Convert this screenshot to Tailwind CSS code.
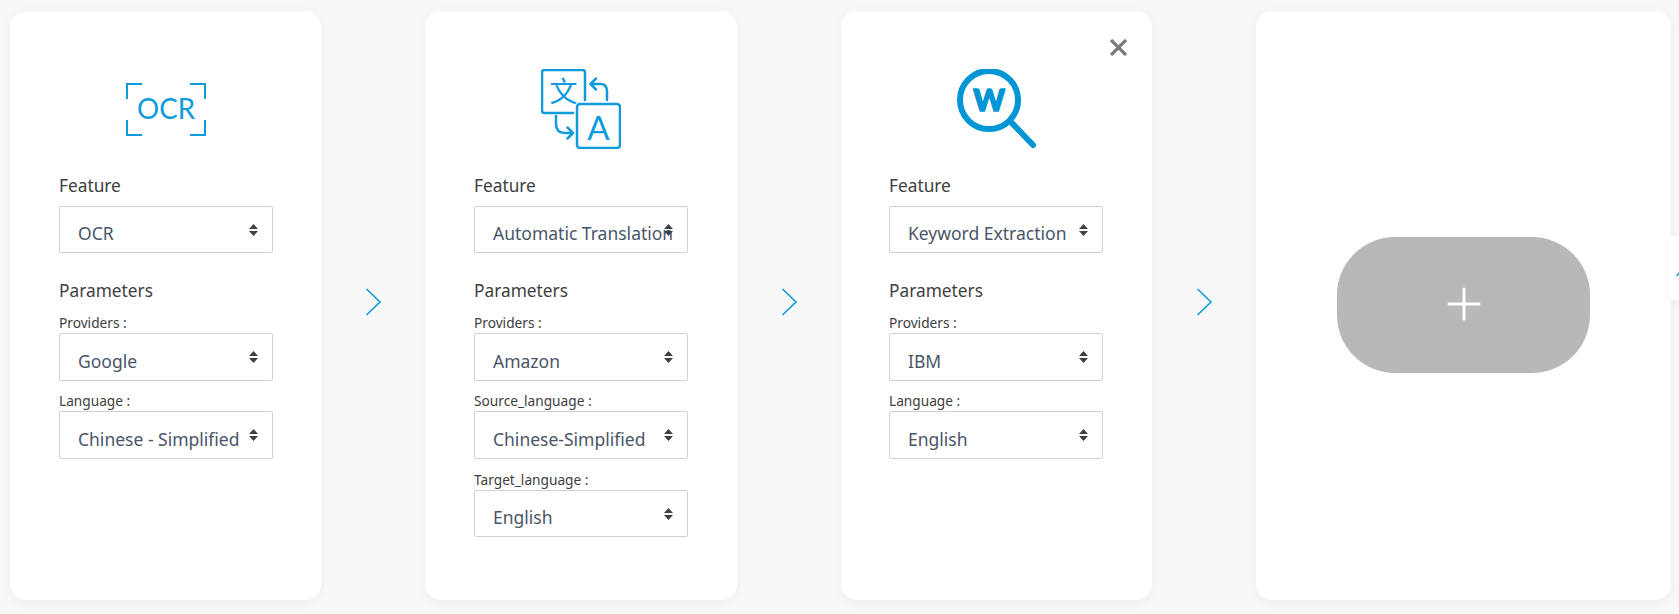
<!DOCTYPE html>
<html lang="en">
<head>
<meta charset="utf-8">
<title>Pipeline</title>
<script src="https://cdn.jsdelivr.net/npm/@tailwindcss/browser@4"></script>
</head>
<body class="bg-[#f8f8f8] font-['Noto_Sans',sans-serif] text-[#404040] overflow-hidden">
<div class="relative flex h-[614px] w-[1679px] pt-[11px] pb-[14px] pl-[10px] overflow-hidden">

  <!-- Card 1 -->
  <section class="w-[311px] shrink-0 bg-white rounded-2xl shadow-[0_2px_12px_rgba(0,0,0,0.05)] pt-[58px] pl-[49px] pr-[48px]">
    <div class="h-[80px] flex items-center justify-center pr-[1px]">
      <svg width="80" height="54" viewBox="0 0 80 54" fill="none" stroke="#0f9bdc" stroke-width="2">
        <path d="M1 17V2H16M64 2H79V17M1 38V53H16M64 53H79V38"/>
        <text x="11" y="37" textLength="58" lengthAdjust="spacingAndGlyphs" font-family="Lato" font-size="29" fill="#0f9bdc" stroke="none">OCR</text>
      </svg>
    </div>
    <div class="mt-[25px] h-[24px] text-[17.3px] leading-[24px]">Feature</div>
    <div class="relative mt-[8px] h-[47px] border border-[#ccd2dc] rounded-[2px] pl-[18px] pt-[14px] text-[17.5px] leading-[24px] text-[#4a5568] whitespace-nowrap overflow-hidden">OCR
      <svg class="absolute right-[14px] top-[17px]" width="9" height="12" viewBox="0 0 9 12" fill="#3f3f46"><path d="M4.5 0L9 5H0ZM4.5 12L0 7H9Z"/></svg></div>
    <div class="mt-[26px] h-[24px] text-[17.3px] leading-[24px]">Parameters</div>
    <div class="mt-[9px] h-[21px] text-[13.7px] leading-[21px]">Providers :</div>
    <div class="relative h-[48px] border border-[#ccd2dc] rounded-[2px] pl-[18px] pt-[15px] text-[17.5px] leading-[24px] text-[#4a5568] whitespace-nowrap overflow-hidden">Google
      <svg class="absolute right-[14px] top-[17px]" width="9" height="12" viewBox="0 0 9 12" fill="#3f3f46"><path d="M4.5 0L9 5H0ZM4.5 12L0 7H9Z"/></svg></div>
    <div class="mt-[9px] h-[21px] text-[13.7px] leading-[21px]">Language :</div>
    <div class="relative h-[48px] border border-[#ccd2dc] rounded-[2px] pl-[18px] pt-[15px] text-[17.5px] leading-[24px] text-[#4a5568] whitespace-nowrap overflow-hidden">Chinese - Simplified
      <svg class="absolute right-[14px] top-[17px]" width="9" height="12" viewBox="0 0 9 12" fill="#3f3f46"><path d="M4.5 0L9 5H0ZM4.5 12L0 7H9Z"/></svg></div>
  </section>

  <div class="w-[104px] shrink-0 flex items-center justify-center pb-[8px]">
    <svg width="17" height="28" viewBox="0 0 17 28" fill="none" stroke="#0f9bdc" stroke-width="1.6"><path d="M1.5 1L15 14L1.5 27"/></svg>
  </div>

  <!-- Card 2 -->
  <section class="w-[312px] shrink-0 bg-white rounded-2xl shadow-[0_2px_12px_rgba(0,0,0,0.05)] pt-[58px] pl-[49px] pr-[49px]">
    <div class="h-[80px] flex items-center justify-center">
      <svg width="80" height="80" viewBox="0 0 80 80" fill="none" stroke="#0f9bdc" stroke-width="2.5" stroke-linecap="round" stroke-linejoin="round">
        <path d="M44 31V3.5Q44 1 41.500 1H3.500Q1 1 1 3.500V41.500Q1 44 3.500 44H32"/>
        <rect x="36" y="35" width="43" height="44" rx="3"/>
        <path d="M66 31V22Q66 15 59 15H50M55 9.500L49.500 15L55 20.500"/>
        <path d="M15 47V55Q15 64 24 64H32M26.500 58.500L32 64L26.500 69.500"/>
        <text x="22.500" y="33" text-anchor="middle" font-family="'Noto Sans CJK SC'" font-size="28" font-weight="400" fill="#0f9bdc" stroke="none">文</text>
        <text x="57.500" y="71" text-anchor="middle" font-family="Lato" font-size="33" fill="#0f9bdc" stroke="none">A</text>
      </svg>
    </div>
    <div class="mt-[25px] h-[24px] text-[17.3px] leading-[24px]">Feature</div>
    <div class="relative mt-[8px] h-[47px] border border-[#ccd2dc] rounded-[2px] pl-[18px] pt-[14px] text-[17.5px] leading-[24px] text-[#4a5568] whitespace-nowrap overflow-hidden">Automatic Translation
      <svg class="absolute right-[14px] top-[17px]" width="9" height="12" viewBox="0 0 9 12" fill="#3f3f46"><path d="M4.5 0L9 5H0ZM4.5 12L0 7H9Z"/></svg></div>
    <div class="mt-[26px] h-[24px] text-[17.3px] leading-[24px]">Parameters</div>
    <div class="mt-[9px] h-[21px] text-[13.7px] leading-[21px]">Providers :</div>
    <div class="relative h-[48px] border border-[#ccd2dc] rounded-[2px] pl-[18px] pt-[15px] text-[17.5px] leading-[24px] text-[#4a5568] whitespace-nowrap overflow-hidden">Amazon
      <svg class="absolute right-[14px] top-[17px]" width="9" height="12" viewBox="0 0 9 12" fill="#3f3f46"><path d="M4.5 0L9 5H0ZM4.5 12L0 7H9Z"/></svg></div>
    <div class="mt-[9px] h-[21px] text-[13.7px] leading-[21px]">Source_language :</div>
    <div class="relative h-[48px] border border-[#ccd2dc] rounded-[2px] pl-[18px] pt-[15px] text-[17.5px] leading-[24px] text-[#4a5568] whitespace-nowrap overflow-hidden">Chinese-Simplified
      <svg class="absolute right-[14px] top-[17px]" width="9" height="12" viewBox="0 0 9 12" fill="#3f3f46"><path d="M4.5 0L9 5H0ZM4.5 12L0 7H9Z"/></svg></div>
    <div class="mt-[10px] h-[21px] text-[13.7px] leading-[21px]">Target_language :</div>
    <div class="relative h-[47px] border border-[#ccd2dc] rounded-[2px] pl-[18px] pt-[14px] text-[17.5px] leading-[24px] text-[#4a5568] whitespace-nowrap overflow-hidden">English
      <svg class="absolute right-[14px] top-[17px]" width="9" height="12" viewBox="0 0 9 12" fill="#3f3f46"><path d="M4.5 0L9 5H0ZM4.5 12L0 7H9Z"/></svg></div>
  </section>

  <div class="w-[104px] shrink-0 flex items-center justify-center pb-[8px]">
    <svg width="17" height="28" viewBox="0 0 17 28" fill="none" stroke="#0f9bdc" stroke-width="1.6"><path d="M1.5 1L15 14L1.5 27"/></svg>
  </div>

  <!-- Card 3 -->
  <section class="relative w-[311px] shrink-0 bg-white rounded-2xl shadow-[0_2px_12px_rgba(0,0,0,0.05)] pt-[58px] pl-[48px] pr-[49px]">
    <svg class="absolute right-[25px] top-[28px]" width="17" height="17" viewBox="0 0 17 17" fill="none" stroke="#7a7a7a" stroke-width="3.2"><path d="M1 1L16 16M16 1L1 16"/></svg>
    <div class="h-[80px] flex items-center justify-center pl-[2px]">
      <svg width="80" height="80" viewBox="0 0 80 80" fill="none" stroke="#0095d5" stroke-width="6" stroke-linecap="round">
        <circle cx="32" cy="31" r="29"/>
        <path d="M53 52L76 76"/>
        <text x="32" y="42" text-anchor="middle" font-family="Lato" font-weight="900" font-size="30" fill="#0095d5" stroke="#0095d5" stroke-width="1.500" stroke-linejoin="round">W</text>
      </svg>
    </div>
    <div class="mt-[25px] h-[24px] text-[17.3px] leading-[24px]">Feature</div>
    <div class="relative mt-[8px] h-[47px] border border-[#ccd2dc] rounded-[2px] pl-[18px] pt-[14px] text-[17.5px] leading-[24px] text-[#4a5568] whitespace-nowrap overflow-hidden">Keyword Extraction
      <svg class="absolute right-[14px] top-[17px]" width="9" height="12" viewBox="0 0 9 12" fill="#3f3f46"><path d="M4.5 0L9 5H0ZM4.5 12L0 7H9Z"/></svg></div>
    <div class="mt-[26px] h-[24px] text-[17.3px] leading-[24px]">Parameters</div>
    <div class="mt-[9px] h-[21px] text-[13.7px] leading-[21px]">Providers :</div>
    <div class="relative h-[48px] border border-[#ccd2dc] rounded-[2px] pl-[18px] pt-[15px] text-[17.5px] leading-[24px] text-[#4a5568] whitespace-nowrap overflow-hidden">IBM
      <svg class="absolute right-[14px] top-[17px]" width="9" height="12" viewBox="0 0 9 12" fill="#3f3f46"><path d="M4.5 0L9 5H0ZM4.5 12L0 7H9Z"/></svg></div>
    <div class="mt-[9px] h-[21px] text-[13.7px] leading-[21px]">Language :</div>
    <div class="relative h-[48px] border border-[#ccd2dc] rounded-[2px] pl-[18px] pt-[15px] text-[17.5px] leading-[24px] text-[#4a5568] whitespace-nowrap overflow-hidden">English
      <svg class="absolute right-[14px] top-[17px]" width="9" height="12" viewBox="0 0 9 12" fill="#3f3f46"><path d="M4.5 0L9 5H0ZM4.5 12L0 7H9Z"/></svg></div>
  </section>

  <div class="w-[104px] shrink-0 flex items-center justify-center pb-[8px]">
    <svg width="17" height="28" viewBox="0 0 17 28" fill="none" stroke="#0f9bdc" stroke-width="1.6"><path d="M1.5 1L15 14L1.5 27"/></svg>
  </div>

  <!-- Card 4 -->
  <section class="w-[415px] shrink-0 bg-white rounded-2xl shadow-[0_2px_12px_rgba(0,0,0,0.05)] flex items-center justify-center">
    <button class="w-[253px] h-[136px] rounded-[58px] bg-[#b8b8b8] flex items-center justify-center pb-[3px] mb-[1px]" aria-label="Add">
      <svg width="34" height="34" viewBox="0 0 34 34" fill="none" stroke="#fff" stroke-width="3" stroke-linecap="round"><path d="M17 2V32M2 17H32"/></svg>
    </button>
  </section>

  <!-- Side tab -->
  <div class="absolute right-0 top-[236px] w-[11px] h-[64px] bg-white rounded-l-[4px] shadow-[0_2px_8px_rgba(0,0,0,0.05)] overflow-hidden">
    <svg class="absolute left-[8px] top-[34px]" width="10" height="12" viewBox="0 0 10 12" fill="none" stroke="#0f9bdc" stroke-width="1.5"><path d="M0.500 6L5 1L10 6"/></svg>
  </div>
</div>
</body>
</html>
